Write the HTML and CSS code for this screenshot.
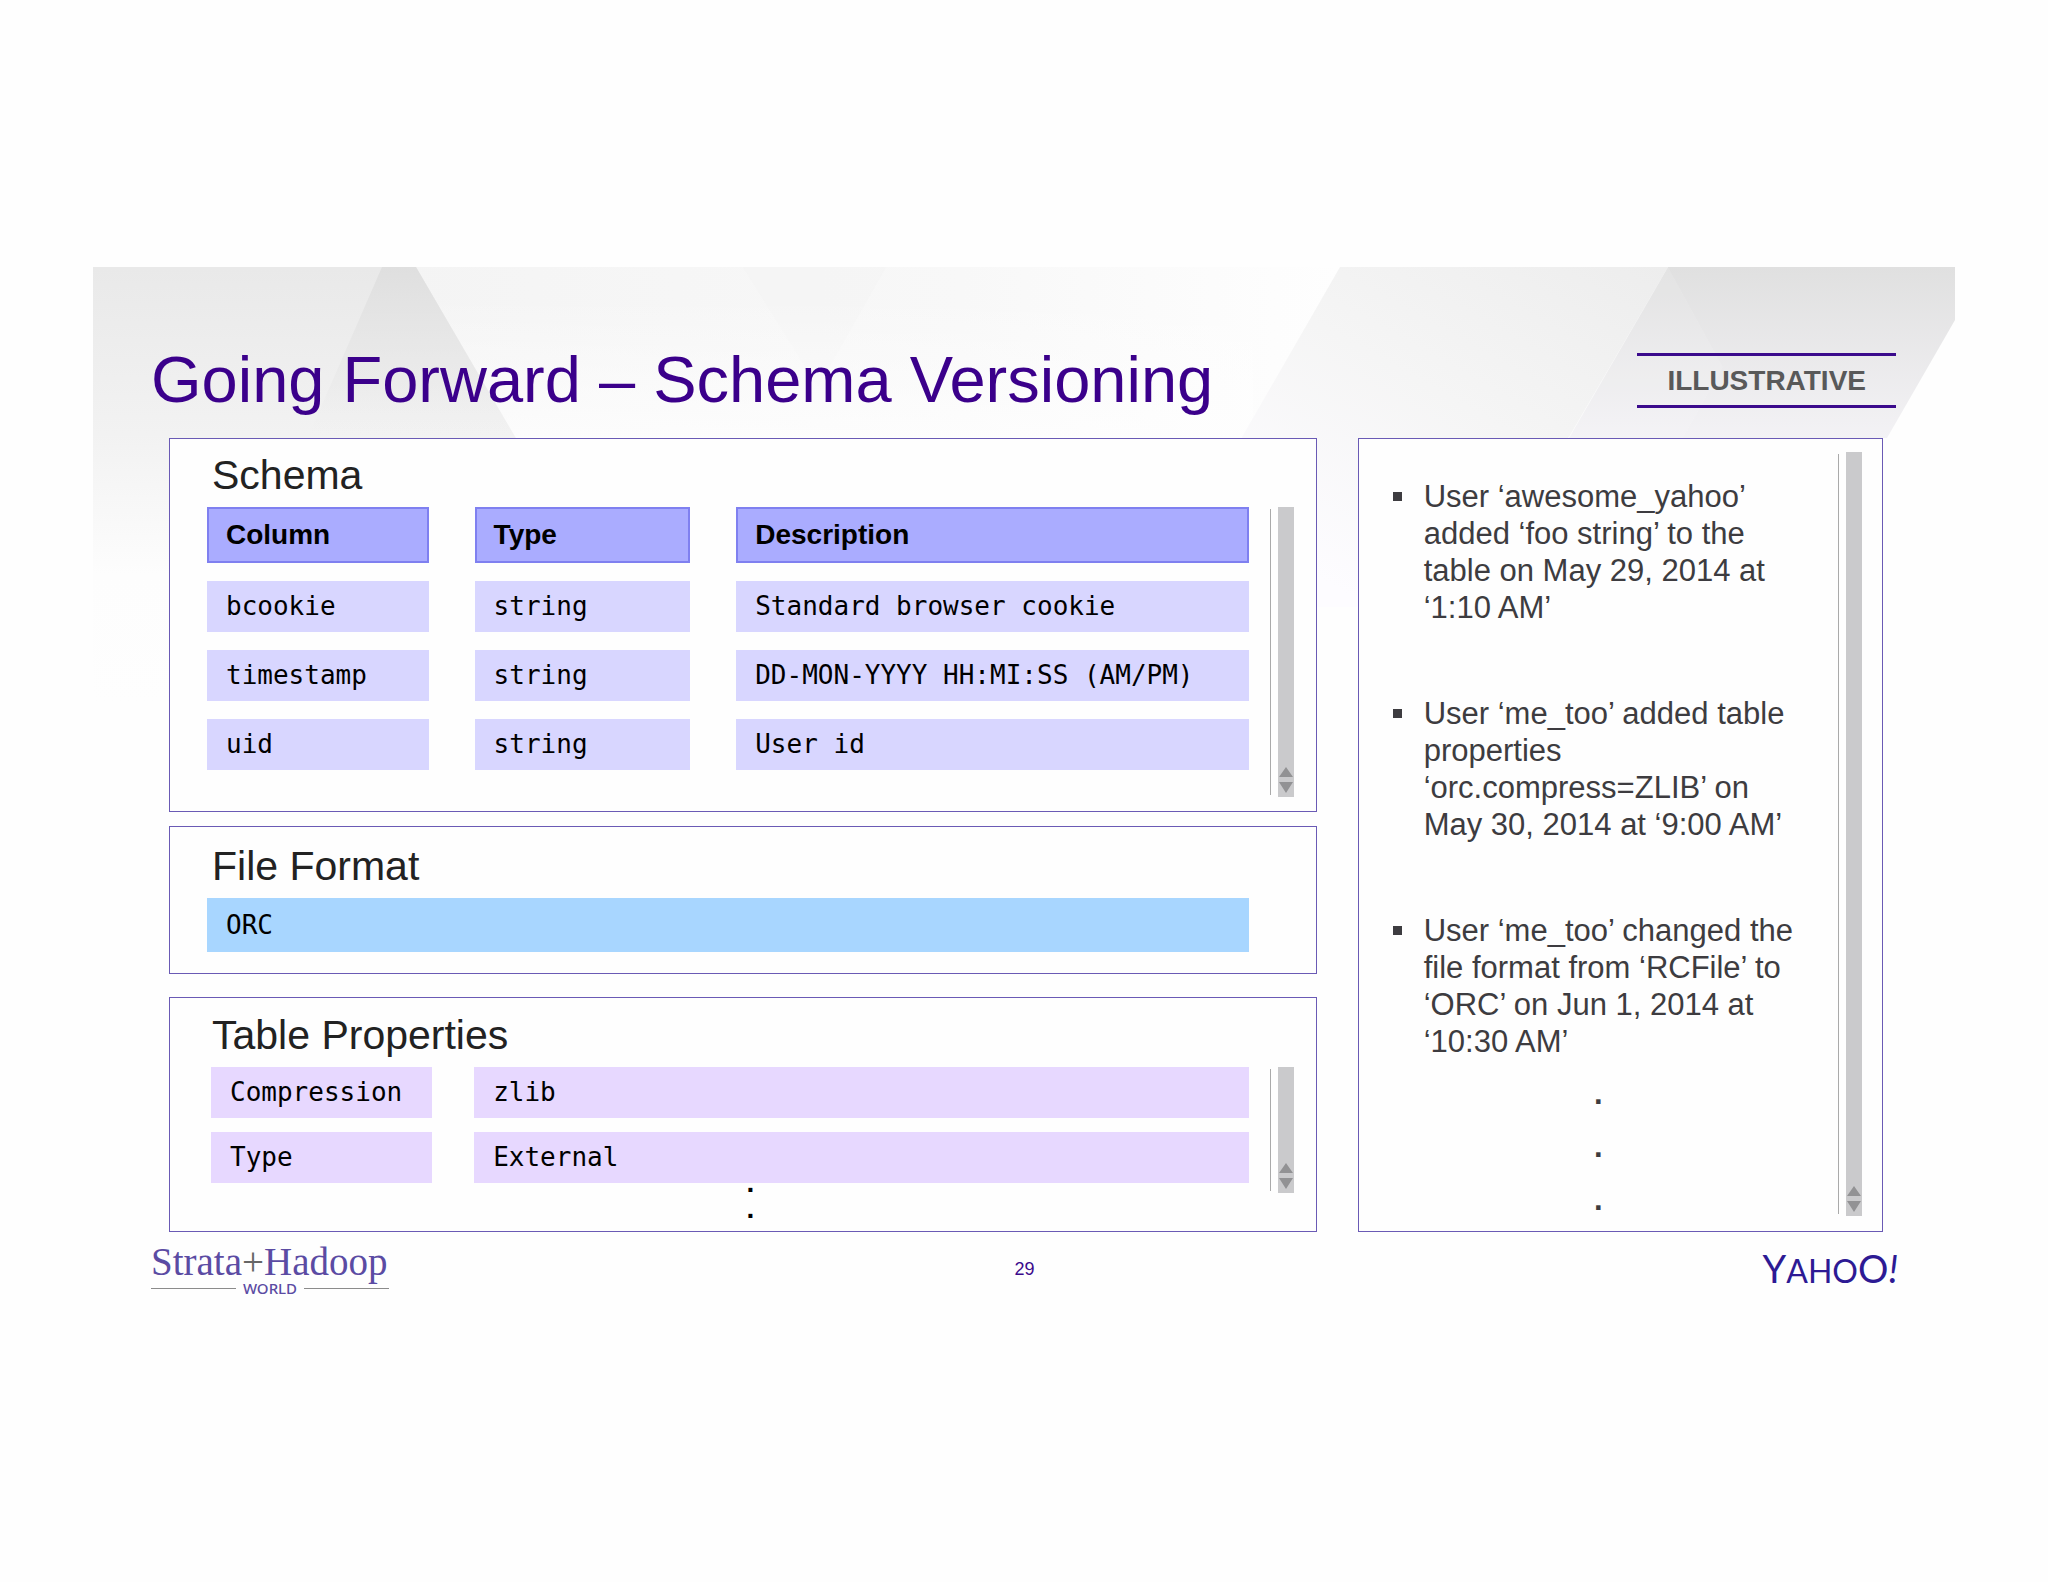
FILE: index.html
```html
<!DOCTYPE html>
<html lang="en">
<head>
  <meta charset="UTF-8">
  <title>Going Forward – Schema Versioning</title>
  <meta name="viewport" content="width=device-width, initial-scale=1.0">
  <link rel="stylesheet" href="styles.css">
</head>
<body>
  <div class="slide">

    <!-- Faceted grey backdrop -->
    <svg class="backdrop" viewBox="0 0 1862 440" preserveAspectRatio="none" aria-hidden="true">
      <defs>
        <linearGradient id="left" x1="0" y1="0" x2="0" y2="1">
          <stop offset="0" stop-color="#e9e9e9"/>
          <stop offset="0.38" stop-color="#f2f2f2"/>
          <stop offset="0.7" stop-color="#fdfdfd"/>
          <stop offset="1" stop-color="#fefefe"/>
        </linearGradient>
        <linearGradient id="shade" x1="0" y1="0" x2="0" y2="1">
          <stop offset="0" stop-color="#dfdfdf"/>
          <stop offset="0.7" stop-color="#e6e6e6" stop-opacity="0.4"/>
          <stop offset="1" stop-color="#eee" stop-opacity="0"/>
        </linearGradient>
        <linearGradient id="middle" x1="0" y1="0" x2="1" y2="0">
          <stop offset="0" stop-color="#f4f4f4"/>
          <stop offset="0.6" stop-color="#f8f8f8"/>
          <stop offset="1" stop-color="#fefefe"/>
        </linearGradient>
        <linearGradient id="light" x1="1" y1="0" x2="0.3" y2="1">
          <stop offset="0" stop-color="#ededed"/>
          <stop offset="0.5" stop-color="#f5f5f5"/>
          <stop offset="1" stop-color="#fdfcff"/>
        </linearGradient>
        <linearGradient id="right" x1="0" y1="0" x2="0" y2="1">
          <stop offset="0" stop-color="#e0e0e0"/>
          <stop offset="1" stop-color="#f3f2f5"/>
        </linearGradient>
        <linearGradient id="fade" x1="0" y1="0" x2="0" y2="1">
          <stop offset="0" stop-color="#fefefe" stop-opacity="0"/>
          <stop offset="1" stop-color="#fefefe" stop-opacity="0.8"/>
        </linearGradient>
      </defs>
      <polygon points="300,0 1247,0 1149,170 400,170" fill="url(#middle)"/>
      <polygon points="650,0 793,0 725,120" fill="#f3f3f3" opacity="0.5"/>
      <rect x="300" y="30" width="860" height="140" fill="url(#fade)"/>
      <polygon points="0,0 323,0 580,440 0,440" fill="url(#left)"/>
      <polygon points="289,0 323,0 422,170 215,170" fill="url(#shade)"/>
      <polygon points="1247,0 1575,0 1476,170 1264,340 1222,340 1149,170" fill="url(#light)"/>
      <polygon points="1575,0 1862,0 1862,53 1794,171 1476,171" fill="url(#right)"/>
      <polygon points="1575,0 1630,100 1590,171 1476,171" fill="#fff" opacity="0.1"/>
    </svg>

    <header class="header">
      <h1 class="title">Going Forward – Schema Versioning</h1>
      <div class="badge">ILLUSTRATIVE</div>
    </header>

    <main class="content">
      <div class="details">

        <!-- Schema -->
        <section class="panel schema">
          <h2 class="heading">Schema</h2>
          <div class="scroll-area">
            <table class="grid schema-grid">
              <thead>
                <tr><th>Column</th><th>Type</th><th>Description</th></tr>
              </thead>
              <tbody>
                <tr><td>bcookie</td><td>string</td><td>Standard browser cookie</td></tr>
                <tr><td>timestamp</td><td>string</td><td>DD-MON-YYYY HH:MI:SS (AM/PM)</td></tr>
                <tr><td>uid</td><td>string</td><td>User id</td></tr>
              </tbody>
            </table>
            <div class="scroller">
              <span class="scroll-line"></span>
              <span class="scroll-bar">
                <svg width="14" height="26" viewBox="0 0 14 26"><path d="M7 0L14 10H0zM0 15H14L7 26z"/></svg>
              </span>
            </div>
          </div>
        </section>

        <!-- File format -->
        <section class="panel format">
          <h2 class="heading">File Format</h2>
          <div class="format-value">ORC</div>
        </section>

        <!-- Table properties -->
        <section class="panel properties">
          <h2 class="heading">Table Properties</h2>
          <div class="scroll-area">
            <table class="grid property-grid">
              <tbody>
                <tr><td>Compression</td><td>zlib</td></tr>
                <tr><td>Type</td><td>External</td></tr>
              </tbody>
            </table>
            <div class="scroller">
              <span class="scroll-line"></span>
              <span class="scroll-bar">
                <svg width="14" height="26" viewBox="0 0 14 26"><path d="M7 0L14 10H0zM0 15H14L7 26z"/></svg>
              </span>
            </div>
          </div>
          <div class="more">.<br>.</div>
        </section>
      </div>

      <!-- Change log -->
      <section class="panel history">
        <div class="history-text">
          <ul class="changes">
            <li><span>User ‘awesome_yahoo’ added ‘foo string’ to the table on May 29, 2014 at ‘1:10 AM’</span></li>
            <li><span>User ‘me_too’ added table properties ‘orc.compress=ZLIB’ on May 30, 2014 at ‘9:00 AM’</span></li>
            <li><span>User ‘me_too’ changed the file format from ‘RCFile’ to ‘ORC’ on Jun 1, 2014 at ‘10:30 AM’</span></li>
          </ul>
          <div class="more-changes">.<br>.<br>.</div>
        </div>
        <div class="scroller">
          <span class="scroll-line"></span>
          <span class="scroll-bar">
            <svg width="14" height="26" viewBox="0 0 14 26"><path d="M7 0L14 10H0zM0 15H14L7 26z"/></svg>
          </span>
        </div>
      </section>
    </main>

    <footer class="footer">
      <div class="strata">
        <div class="strata-name">Strata<span class="plus">+</span>Hadoop</div>
        <div class="strata-world">WORLD</div>
      </div>
      <div class="page-number">29</div>
      <div class="yahoo"><span class="big">Y</span>AHO<span class="big">O</span><i class="bang">!</i></div>
    </footer>
  </div>
</body>
</html>
```
FILE: styles.css
```css
* {
  box-sizing: border-box;
}
body {
  margin: 0;
  padding: 267px 93px 0;
  background-color: #fefefe;
  font-family: "Liberation Sans", Arial, sans-serif;
  color: #000;
}
.slide {
  position: relative;
}
.backdrop {
  position: absolute;
  top: 0;
  left: 0;
  width: 100%;
  height: 440px;
  z-index: -1;
}

/* Header */
.header {
  display: flex;
  justify-content: space-between;
  align-items: center;
  padding: 81px 59px 26px 58px;
}
.title {
  margin: 0;
  font-size: 65px;
  line-height: 64px;
  font-weight: normal;
  color: #3b008b;
}
.badge {
  padding: 0 30px;
  border-top: 3px solid #3b0a8c;
  border-bottom: 3px solid #3b0a8c;
  font-size: 28px;
  line-height: 49px;
  font-weight: bold;
  color: #595959;
}

/* Panels */
.content {
  display: grid;
  grid-template-columns: 1147fr 525fr;
  gap: 41px;
  padding: 0 72px 0 76px;
}
.details {
  display: flex;
  flex-direction: column;
  gap: 14px;
}
.panel {
  border: 1px solid #6a5ab5;
  background-color: #fefefe;
}
.schema {
  padding: 12px 22px 14px 37px;
}
.format {
  padding: 15px 22px 21px 37px;
}
.properties {
  margin-top: 9px;
  padding: 13px 22px 9px 37px;
}
.heading {
  margin: 0 0 8px;
  padding-left: 5px;
  font-size: 41px;
  line-height: 48px;
  font-weight: normal;
  color: #222;
}

/* Tables */
.scroll-area {
  display: flex;
  gap: 21px;
}
.schema .scroll-area {
  min-height: 290px;
}
.properties .scroll-area {
  min-height: 126px;
}
.grid {
  display: grid;
  flex: 1;
  align-content: start;
}
.grid thead, .grid tbody, .grid tr {
  display: contents;
}
.schema-grid {
  grid-template-columns: 221fr 215fr 511fr;
  gap: 18px 46px;
}
.property-grid {
  grid-template-columns: 221fr 774fr;
  gap: 14px 42px;
  padding-left: 4px;
}
th, td, .format-value {
  padding: 0 19px;
  font-family: "DejaVu Sans Mono", monospace;
  font-size: 26px;
  line-height: 51px;
  text-align: left;
}
th {
  padding: 0 17px;
  border: 2px solid #7f80f0;
  background-color: #aaacff;
  font-family: "Liberation Sans", Arial, sans-serif;
  font-size: 28px;
  line-height: 52px;
}
td {
  background-color: #d8d6ff;
}
.property-grid td {
  background-color: #e7d8ff;
}
.format-value {
  margin-right: 45px;
  background-color: #a8d6ff;
  line-height: 54px;
}
.more {
  margin-top: -23px;
  font-size: 28px;
  line-height: 26px;
  font-weight: bold;
  text-align: center;
}

/* Scroll bars */
.scroller {
  display: flex;
  gap: 7px;
}
.scroll-line {
  width: 1px;
  margin: 2px 0;
  background-color: #aaa;
}
.scroll-bar {
  display: flex;
  align-items: flex-end;
  justify-content: center;
  width: 16px;
  padding-bottom: 4px;
  background-color: #cacacc;
}
.scroll-bar svg {
  fill: #929294;
}

/* Change log */
.history {
  display: flex;
  justify-content: space-between;
  padding: 0 20px 0 34px;
}
.history .scroller {
  margin: 13px 0 15px;
}
.history-text {
  flex: 1;
  padding: 39px 34px 4px 0;
  font-size: 31px;
  color: #3d3c40;
}
.changes {
  display: flex;
  flex-direction: column;
  gap: 69px;
  margin: 0;
  padding: 0;
  list-style: none;
  line-height: 37px;
}
.changes li {
  display: flex;
  gap: 22px;
}
.changes li::before {
  content: "";
  flex: none;
  width: 9px;
  height: 9px;
  margin-top: 14px;
  background-color: #3d3c40;
}
.more-changes {
  margin-top: 7px;
  line-height: 53px;
  font-weight: bold;
  text-align: center;
}

/* Footer */
.footer {
  display: grid;
  grid-template-columns: 1fr auto 1fr;
  align-items: center;
  padding: 11px 57px 0 58px;
}
.strata {
  width: 238px;
  color: #5b4ba3;
}
.strata-name {
  font-family: "Liberation Serif", serif;
  font-size: 39px;
  line-height: 38px;
}
.plus {
  color: #666;
}
.strata-world {
  display: flex;
  align-items: center;
  gap: 7px;
  font-family: "Noto Sans", sans-serif;
  font-size: 15px;
  line-height: 14px;
  font-weight: 500;
}
.strata-world::before, .strata-world::after {
  content: "";
  flex: 1;
  height: 1px;
  background-color: #8b8b8b;
}
.page-number {
  font-size: 18px;
  line-height: 24px;
  color: #3b0a8c;
}
.yahoo {
  justify-self: end;
  font-family: Lato, sans-serif;
  font-size: 32px;
  line-height: 40px;
  color: #2d1a94;
}
.big, .bang {
  font-size: 38px;
}
```
